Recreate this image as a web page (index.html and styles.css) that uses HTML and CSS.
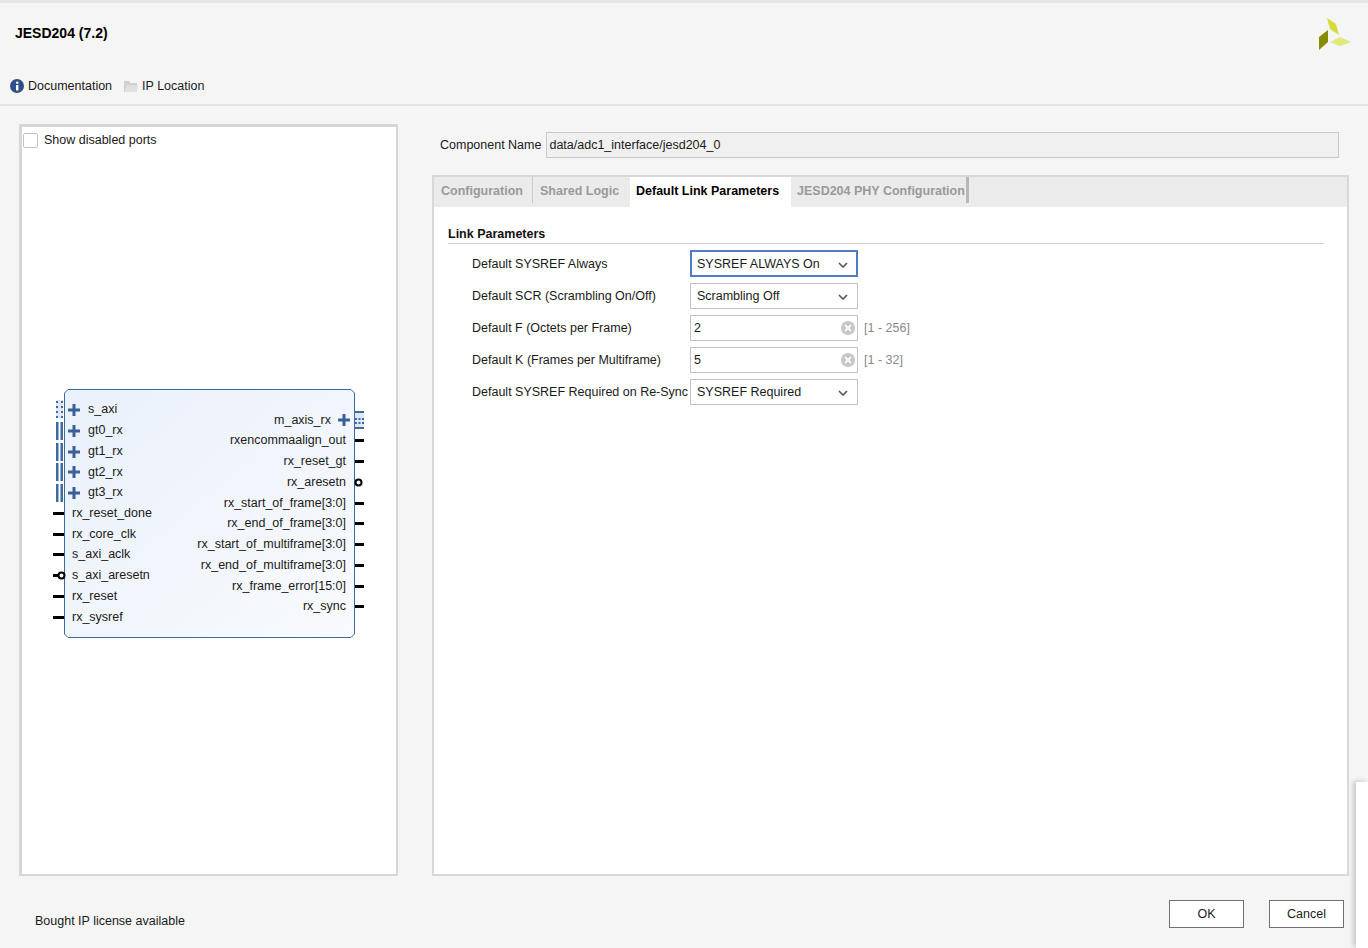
FILE: index.html
```html
<!DOCTYPE html>
<html>
<head>
    <meta charset="UTF-8">
    <title>JESD204 (7.2)</title>
    <link rel="stylesheet" href="styles.css">
</head>
<body>
    <div class="app">
        <div class="header">
            <div class="title">JESD204 (7.2)</div>
            <svg class="logo" width="34" height="34" viewBox="1319 17 34 34">
                <polygon points="1328,18 1337,24 1340,35 1331,29" fill="#d5dc3a"/>
                <polygon points="1320,37 1329,30 1329,42 1320,50" fill="#858c00"/>
                <polygon points="1331,42 1341,37 1352,42 1341,46" fill="#e2e97c"/>
            </svg>
        </div>
        <div class="toolbar">
            <span class="tool">
                <svg width="14" height="14" viewBox="0 0 14 14">
                    <circle cx="7" cy="7" r="7" fill="#2f4f8a"/>
                    <rect x="6" y="6" width="2.4" height="5.5" fill="#fff"/>
                    <rect x="6.2" y="2.6" width="2.2" height="2.2" fill="#fff"/>
                </svg>
                Documentation
            </span>
            <span class="tool">
                <svg width="14" height="13" viewBox="0 0 14 13">
                    <path d="M0 1h5l1 2h7v2H3L1 12H0z" fill="#d0d0d0"/>
                    <path d="M3 5h11l-1 7H1z" fill="#e0e0e0"/>
                </svg>
                IP Location
            </span>
        </div>

        <div class="main">
            <div class="symbol-panel">
                <label class="show-ports"><span class="checkbox"></span>Show disabled ports</label>
                <svg class="symbol" width="340" height="260" viewBox="45 382 340 260">
                    <defs>
                        <linearGradient id="blockFill" x1="0" y1="0" x2="1" y2="1">
                            <stop offset="0" stop-color="#eaf1fb"/>
                            <stop offset="1" stop-color="#f8fafd"/>
                        </linearGradient>
                        <g id="plus">
                            <rect x="-6" y="-1.5" width="12" height="3" fill="#3b5f99"/>
                            <rect x="-1.5" y="-6" width="3" height="12" fill="#3b5f99"/>
                        </g>
                        <g id="bus">
                            <rect x="0" y="0" width="2.5" height="18" fill="#3d6aa5"/>
                            <rect x="4.5" y="0" width="2.5" height="18" fill="#3d6aa5"/>
                        </g>
                        <g id="dots">
                            <rect x="0" y="0" width="7" height="18" fill="#dfe7f2"/>
                            <path d="M0 1h2v2H0zM5 1h2v2H5zM0 6h2v2H0zM5 6h2v2H5zM0 11h2v2H0zM5 11h2v2H5zM0 16h2v2H0zM5 16h2v2H5z" fill="#3d6aa5"/>
                        </g>
                    </defs>
                    <polygon class="block" points="68,389.5 351,389.5 354.5,393 354.5,634 351,637.5 68,637.5 64.5,634 64.5,393"/>

                    <use href="#dots" x="56" y="400"/>
                    <use href="#bus" x="56" y="422"/>
                    <use href="#bus" x="56" y="443"/>
                    <use href="#bus" x="56" y="463"/>
                    <use href="#bus" x="56" y="484"/>
                    <use href="#plus" x="74" y="410"/>
                    <use href="#plus" x="74" y="431"/>
                    <use href="#plus" x="74" y="452"/>
                    <use href="#plus" x="74" y="472"/>
                    <use href="#plus" x="74" y="493"/>
                    <use href="#plus" x="344" y="420"/>
                    <g transform="translate(355 411)">
                        <rect width="9" height="18" fill="#dfe7f2"/>
                        <path d="M0 0h9v2H0zM0 16h9v2H0zM0 7h2v2H0zM3.5 7h2v2h-2zM7 7h2v2H7zM0 11h2v2H0zM3.5 11h2v2h-2zM7 11h2v2H7z" fill="#3d6aa5"/>
                    </g>

                    <g class="pins">
                        <rect x="53" y="512" width="11" height="3"/>
                        <rect x="53" y="533" width="11" height="3"/>
                        <rect x="53" y="553" width="11" height="3"/>
                        <rect x="53" y="574" width="6" height="3"/>
                        <rect x="53" y="595" width="11" height="3"/>
                        <rect x="53" y="616" width="11" height="3"/>
                        <rect x="355" y="439" width="9" height="3"/>
                        <rect x="355" y="460" width="9" height="3"/>
                        <rect x="355" y="502" width="9" height="3"/>
                        <rect x="355" y="522" width="9" height="3"/>
                        <rect x="355" y="543" width="9" height="3"/>
                        <rect x="355" y="564" width="9" height="3"/>
                        <rect x="355" y="585" width="9" height="3"/>
                        <rect x="355" y="605" width="9" height="3"/>
                    </g>
                    <circle class="bubble" cx="61.500" cy="575.500" r="3"/>
                    <circle class="bubble" cx="358.500" cy="482.500" r="3"/>

                    <g class="port-left">
                        <text x="88" y="413">s_axi</text>
                        <text x="88" y="434">gt0_rx</text>
                        <text x="88" y="455">gt1_rx</text>
                        <text x="88" y="476">gt2_rx</text>
                        <text x="88" y="496">gt3_rx</text>
                        <text x="72" y="517">rx_reset_done</text>
                        <text x="72" y="538">rx_core_clk</text>
                        <text x="72" y="558">s_axi_aclk</text>
                        <text x="72" y="579">s_axi_aresetn</text>
                        <text x="72" y="600">rx_reset</text>
                        <text x="72" y="621">rx_sysref</text>
                    </g>
                    <g class="port-right">
                        <text x="331" y="424">m_axis_rx</text>
                        <text x="346" y="444">rxencommaalign_out</text>
                        <text x="346" y="465">rx_reset_gt</text>
                        <text x="346" y="486">rx_aresetn</text>
                        <text x="346" y="507">rx_start_of_frame[3:0]</text>
                        <text x="346" y="527">rx_end_of_frame[3:0]</text>
                        <text x="346" y="548">rx_start_of_multiframe[3:0]</text>
                        <text x="346" y="569">rx_end_of_multiframe[3:0]</text>
                        <text x="346" y="590">rx_frame_error[15:0]</text>
                        <text x="346" y="610">rx_sync</text>
                    </g>
                </svg>
            </div>

            <div class="config">
                <div class="component-row">
                    <span class="component-label">Component Name</span>
                    <div class="component-field">data/adc1_interface/jesd204_0</div>
                </div>
                <div class="tab-panel">
                    <div class="tabs">
                        <div class="tab tab-config">Configuration</div>
                        <div class="tab tab-shared">Shared Logic</div>
                        <div class="tab tab-active">Default Link Parameters</div>
                        <div class="tab tab-phy">JESD204 PHY Configuration</div>
                    </div>
                    <div class="tab-body">
                        <div class="section-title">Link Parameters</div>
                        <div class="params">
                            <div class="param param-first">
                                <span class="param-label">Default SYSREF Always</span>
                                <div class="select select-focus">SYSREF ALWAYS On
                                    <svg class="chevron" width="10" height="6" viewBox="0 0 10 6"><path d="M1 1l4 4 4-4" fill="none" stroke="#555" stroke-width="1.600"/></svg>
                                </div>
                            </div>
                            <div class="param">
                                <span class="param-label">Default SCR (Scrambling On/Off)</span>
                                <div class="select">Scrambling Off
                                    <svg class="chevron" width="10" height="6" viewBox="0 0 10 6"><path d="M1 1l4 4 4-4" fill="none" stroke="#555" stroke-width="1.600"/></svg>
                                </div>
                            </div>
                            <div class="param">
                                <span class="param-label">Default F (Octets per Frame)</span>
                                <div class="number">2
                                    <svg class="clear" width="14" height="14" viewBox="0 0 14 14"><circle cx="7" cy="7" r="7" fill="#c6c6c6"/><path d="M4 4l6 6M10 4l-6 6" stroke="#fff" stroke-width="1.800"/></svg>
                                </div>
                                <span class="range">[1 - 256]</span>
                            </div>
                            <div class="param">
                                <span class="param-label">Default K (Frames per Multiframe)</span>
                                <div class="number">5
                                    <svg class="clear" width="14" height="14" viewBox="0 0 14 14"><circle cx="7" cy="7" r="7" fill="#c6c6c6"/><path d="M4 4l6 6M10 4l-6 6" stroke="#fff" stroke-width="1.800"/></svg>
                                </div>
                                <span class="range">[1 - 32]</span>
                            </div>
                            <div class="param">
                                <span class="param-label">Default SYSREF Required on Re-Sync</span>
                                <div class="select">SYSREF Required
                                    <svg class="chevron" width="10" height="6" viewBox="0 0 10 6"><path d="M1 1l4 4 4-4" fill="none" stroke="#555" stroke-width="1.600"/></svg>
                                </div>
                            </div>
                        </div>
                    </div>
                </div>
            </div>
        </div>

        <div class="footer">
            <span class="license">Bought IP license available</span>
            <div class="buttons">
                <button class="btn">OK</button>
                <button class="btn">Cancel</button>
            </div>
        </div>
        <div class="corner-window"></div>
    </div>
</body>
</html>
```

FILE: styles.css
```css
html, body {
    margin: 0;
    padding: 0;
}
body {
    background-color: #f5f5f5;
    font-family: "Liberation Sans", Arial, sans-serif;
    font-size: 12.5px;
    color: #1a1a1a;
    overflow: hidden;
}
.app {
    position: relative;
    width: 1368px;
    height: 948px;
    overflow: hidden;
    display: flex;
    flex-direction: column;
}
.header {
    height: 65px;
    box-sizing: border-box;
    border-top: 3px solid #e6e6e6;
    display: flex;
    justify-content: space-between;
    align-items: flex-start;
    padding: 14px 16px 0 15px;
}
.title {
    font-size: 14px;
    font-weight: bold;
    line-height: 34px;
    margin-top: -1px;
    color: #000;
}
.logo {
    margin-top: 0;
}
.toolbar {
    height: 41px;
    box-sizing: border-box;
    border-bottom: 2px solid #e3e3e3;
    display: flex;
    gap: 12px;
    padding: 13px 0 0 10px;
}
.tool {
    display: flex;
    align-items: center;
    gap: 4px;
    height: 16px;
}
.main {
    display: flex;
    align-items: flex-start;
    padding: 18px 0 0 19px;
}
.symbol-panel {
    width: 379px;
    height: 752px;
    box-sizing: border-box;
    background-color: #fff;
    border: 3px solid #d6d6d6;
    border-width: 3px 2px 2px 3px;
}
.show-ports {
    display: flex;
    align-items: center;
    gap: 6px;
    height: 20px;
    padding-top: 3px;
    margin-left: 1px;
}
.checkbox {
    width: 13px;
    height: 13px;
    border: 1px solid #c4c4c4;
    border-radius: 2px;
    background-color: #fff;
}
.symbol {
    display: block;
    margin: 232px 0 0 23px;
}
.block {
    fill: url(#blockFill);
    stroke: #3d6aa5;
    stroke-width: 1;
}
.pins rect {
    fill: #000;
}
.bubble {
    fill: #fff;
    stroke: #000;
    stroke-width: 2;
}
.symbol text {
    font-family: "Liberation Sans", Arial, sans-serif;
    font-size: 12.5px;
    fill: #1a1a1a;
}
.port-right text {
    text-anchor: end;
}
.config {
    width: 917px;
    margin-left: 34px;
}
.component-row {
    display: flex;
    align-items: center;
    gap: 5px;
    padding: 8px 0 0 8px;
}
.component-field {
    width: 793px;
    height: 26px;
    line-height: 24px;
    box-sizing: border-box;
    background-color: #f0f0f0;
    border: 1px solid #c8c8c8;
    padding-left: 2px;
}
.tab-panel {
    height: 701px;
    box-sizing: border-box;
    margin-top: 17px;
    background-color: #fff;
    border: 2px solid #d8d8d8;
    border-bottom-width: 2px;
}
.tabs {
    display: flex;
    height: 30px;
    background-color: #ebebeb;
}
.tab {
    box-sizing: border-box;
    font-weight: bold;
    color: #999;
    line-height: 29px;
    white-space: nowrap;
}
.tab-config {
    width: 99px;
    padding-left: 7px;
    border-right: 1px solid #c9c9c9;
    height: 26px;
}
.tab-shared {
    width: 97px;
    padding-left: 7px;
}
.tab-active {
    width: 161px;
    padding-left: 6px;
    color: #000;
    background-color: #fff;
}
.tab-phy {
    width: 178px;
    padding-left: 6px;
    height: 26px;
    border-right: 3px solid #b8b8b8;
}
.tab-body {
    padding: 18px 23px 0 14px;
}
.section-title {
    font-weight: bold;
    color: #111;
    line-height: 18px;
    border-bottom: 1px solid #d0d0d0;
}
.params {
    padding-left: 24px;
}
.param {
    display: flex;
    align-items: center;
    margin-top: 6px;
    height: 26px;
}
.param-first {
    margin-top: 6px;
    height: 27px;
}
.param-label {
    width: 218px;
    flex: none;
    white-space: nowrap;
}
.select, .number {
    position: relative;
    box-sizing: border-box;
    width: 168px;
    height: 26px;
    line-height: 24px;
    background-color: #fff;
    border: 1px solid #c4c4c4;
}
.select {
    padding-left: 6px;
}
.number {
    padding-left: 3px;
}
.select-focus {
    height: 27px;
    border: 2px solid #4f7bc8;
    padding-left: 5px;
}
.chevron {
    position: absolute;
    right: 9px;
    top: 10px;
}
.select-focus .chevron {
    right: 8px;
}
.clear {
    position: absolute;
    right: 2px;
    top: 5px;
}
.range {
    margin-left: 6px;
    color: #8a8a8a;
}
.footer {
    display: flex;
    justify-content: space-between;
    padding: 24px 24px 0 35px;
}
.license {
    margin-top: 14px;
}
.buttons {
    display: flex;
    gap: 25px;
}
.btn {
    width: 75px;
    height: 28px;
    background-color: #fff;
    border: 1px solid #707070;
    border-radius: 0;
    padding: 0;
    font-family: "Liberation Sans", Arial, sans-serif;
    font-size: 12.5px;
    color: #1a1a1a;
}
.corner-window {
    position: absolute;
    left: 1356px;
    top: 782px;
    width: 12px;
    height: 166px;
    background-color: #fff;
    box-shadow: -3px -1px 5px rgba(0, 0, 0, 0.18);
}
```
